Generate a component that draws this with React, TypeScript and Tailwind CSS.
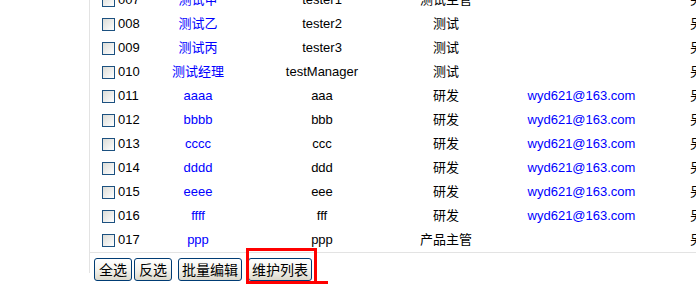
const rows = [
  { id: "007", name: "测试甲", login: "tester1", dept: "测试主管", email: "" },
  { id: "008", name: "测试乙", login: "tester2", dept: "测试", email: "" },
  { id: "009", name: "测试丙", login: "tester3", dept: "测试", email: "" },
  { id: "010", name: "测试经理", login: "testManager", dept: "测试", email: "" },
  { id: "011", name: "aaaa", login: "aaa", dept: "研发", email: "wyd621@163.com" },
  { id: "012", name: "bbbb", login: "bbb", dept: "研发", email: "wyd621@163.com" },
  { id: "013", name: "cccc", login: "ccc", dept: "研发", email: "wyd621@163.com" },
  { id: "014", name: "dddd", login: "ddd", dept: "研发", email: "wyd621@163.com" },
  { id: "015", name: "eeee", login: "eee", dept: "研发", email: "wyd621@163.com" },
  { id: "016", name: "ffff", login: "fff", dept: "研发", email: "wyd621@163.com" },
  { id: "017", name: "ppp", login: "ppp", dept: "产品主管", email: "" },
];

function Checkbox() {
  return (
    <span className="inline-block w-[13px] h-[13px] border border-[#1c5180] bg-gradient-to-br from-[#dcdcd7] to-white shrink-0" />
  );
}

function Btn({ label, w }: { label: string; w: string }) {
  return (
    <button
      className={`${w} h-[23px] border border-[#003c74] rounded-[3px] bg-gradient-to-b from-white via-[#f4f3ee] to-[#dcd9cc] text-[14px] text-black leading-none flex items-center justify-center`}
    >
      {label}
    </button>
  );
}

export default function App() {
  return (
    <div
      className="w-[696px] h-[285px] bg-white overflow-hidden relative text-[13px] text-black"
      style={{ fontFamily: '"Liberation Sans", "Noto Sans CJK SC", sans-serif' }}
    >
      <div className="ml-[89px] border-l border-[#e3e3e3] h-full">
        <div className="-mt-[12px]">
          {rows.map((r) => (
            <div key={r.id} className="h-[24px] flex items-center whitespace-nowrap">
              <div className="w-[61px] shrink-0 pl-[12px] flex items-center gap-[3px]">
                <Checkbox />
                <span>{r.id}</span>
              </div>
              <div className="w-[94px] shrink-0 text-center text-[#0000ff]">{r.name}</div>
              <div className="w-[154px] shrink-0 text-center">{r.login}</div>
              <div className="w-[94px] shrink-0 text-center">{r.dept}</div>
              <div className="w-[177px] shrink-0 text-center text-[#0000ff]">{r.email}</div>
              <div className="shrink-0 pl-[20px]">另</div>
            </div>
          ))}
        </div>
        <div className="border-t border-[#e3e3e3] pt-[5px] pl-[4px] flex items-center">
          <Btn label="全选" w="w-[38px]" />
          <div className="w-[2px]" />
          <Btn label="反选" w="w-[38px]" />
          <div className="w-[6px]" />
          <Btn label="批量编辑" w="w-[64px]" />
          <div className="w-[6px]" />
          <Btn label="维护列表" w="w-[64px]" />
        </div>
      </div>
      <div className="absolute left-[246px] top-[248px] w-[71px] h-[36px] border-[3px] border-[#ff0000]" />
      <div className="absolute left-[316px] top-[281px] w-[12px] h-[3px] bg-[#ff0000]" />
    </div>
  );
}
